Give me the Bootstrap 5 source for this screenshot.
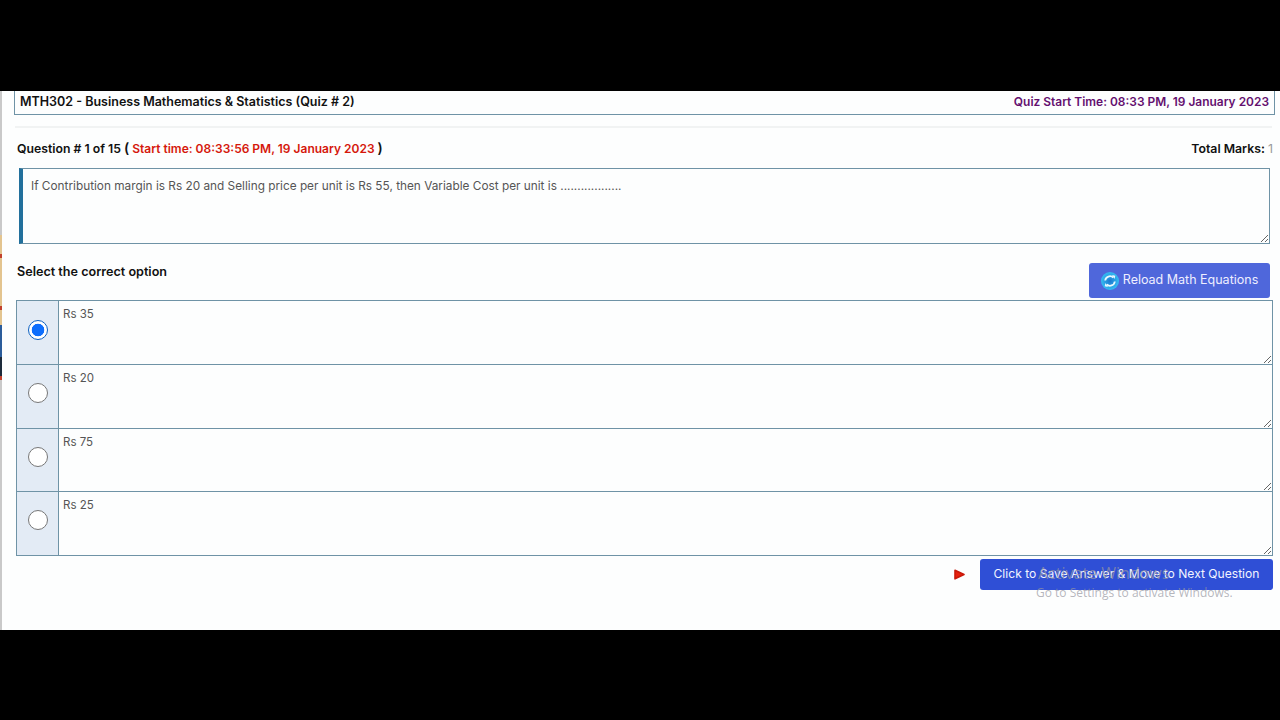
<!DOCTYPE html>
<html lang="en">
<head>
<meta charset="utf-8">
<title>Quiz</title>
<link href="https://cdn.jsdelivr.net/npm/bootstrap@5.3.0/dist/css/bootstrap.min.css" rel="stylesheet">
<style>
html,body{height:720px;overflow:hidden;background:#000;}
body{font-family:Inter,"Open Sans",sans-serif;}
.band-top{height:91px;background:#000;}
.band-bottom{height:90px;background:#000;}
.stage{height:539px;background:#fdfefe;position:relative;padding-left:2px;}
.edge{width:2px;position:absolute;left:0;top:0;bottom:0;background:#c9c9c9;}
.edge-art{position:absolute;left:0;top:144px;width:2px;height:145px;background:linear-gradient(#e3c48f 0 13%,#c2412c 13% 16%,#e3c48f 16% 49%,#c2412c 49% 52%,#e3c48f 52% 62%,#2b5c9a 62% 84%,#1c2a3a 84% 97%,#c2412c 97%);}
.quiz-head{margin:0 5px 0 12px;height:24px;border:1px solid #6f93a6;border-top:0;padding:0 5px;font-size:12.5px;font-weight:600;color:#111;}
.quiz-time{color:#640f6f;font-size:11.95px;padding-bottom:2px;}
.rule{height:2px;background:#f1f3f3;margin:11px 8px 0 13px;}
.q-row{margin:12px 7px 0 15px;font-size:12px;font-weight:600;color:#111;height:18px;}
.q-lead{font-size:12.25px;}
.q-start{color:#d5180c;}
.q-paren{font-size:14px;line-height:1;}
.q-total{font-size:12.3px;}
.mark-val{color:#999;font-weight:400;}
.q-text{display:block;width:1251px;height:76px;margin:10px 0 0 17px;border:1px solid #6f93a6;border-left:4px solid #22709c;border-radius:0;padding:9px 8px;font-size:11.82px;color:#555;background:#fdfefe;font-family:inherit;outline:0;}
.sel-row{margin:19px 10px 0 15px;height:35px;}
.sel-label{font-size:12.6px;font-weight:600;color:#111;}
.btn-reload{width:181px;height:35px;background:#4f67db;border:0;border-radius:3px;color:#eef;font-size:12.5px;padding:0;}
.opts{margin:2px 7px 0 14px;border:1px solid #6f93a6;}
.opt{height:63.5px;}
.opt:first-child{height:63px;}
.opt + .opt{border-top:1px solid #6f93a6;}
.opt-radio{width:42px;padding-bottom:6px;background:#e3ebf5;border-right:1px solid #6f93a6;}
.opt-radio .form-check-input{width:20px;height:20px;margin:0;border-color:#777;background-color:#fff;}
.opt-radio .form-check-input:checked{background-color:#fff;background-image:radial-gradient(circle,#0d6efd 0 6px,#fff 6.6px);border-color:#0b5fc0;}
.opt-text{border:0;border-radius:0;padding:5px 4px;font-size:11.5px;color:#555;background:#fdfefe;font-family:inherit;outline:0;height:100%;}
.foot-row{margin:3px 7px 0 0;gap:15px;}
.btn-next{width:293px;height:31px;background:#2f4fd6;border:0;border-radius:3px;color:#f2f4ff;font-size:12.1px;padding:0;}
.wm{position:absolute;left:1036px;top:473px;color:rgba(150,150,160,.7);font-family:"Open Sans",sans-serif;font-size:12px;line-height:19px;pointer-events:none;}
.wm-first{padding-left:2px;font-size:16px;}
</style>
</head>
<body>
<div class="band-top"></div>
<main class="stage">
  <div class="edge"></div><div class="edge-art"></div>
  <div class="quiz-head d-flex justify-content-between align-items-center">
    <span>MTH302 - Business Mathematics &amp; Statistics (Quiz # 2)</span>
    <span class="quiz-time">Quiz Start Time: 08:33 PM, 19 January 2023</span>
  </div>
  <div class="rule"></div>
  <div class="q-row d-flex justify-content-between align-items-center">
    <span><span class="q-lead">Question # 1 of 15</span> <span class="q-paren">(</span> <span class="q-start">Start time: 08:33:56 PM, 19 January 2023</span> <span class="q-paren">)</span></span>
    <span class="q-total">Total Marks: <span class="mark-val">1</span></span>
  </div>
  <textarea class="q-text" aria-label="Question">If Contribution margin is Rs 20 and Selling price per unit is Rs 55, then Variable Cost per unit is ..................</textarea>
  <div class="sel-row d-flex justify-content-between">
    <span class="sel-label">Select the correct option</span>
    <button type="button" class="btn btn-reload d-flex align-items-center justify-content-center gap-1">
      <svg width="18" height="18" viewBox="0 0 18 18" aria-hidden="true"><defs><radialGradient id="rg"><stop offset="0" stop-color="#1b78d0"/><stop offset="1" stop-color="#35bdf2"/></radialGradient></defs><circle cx="9" cy="9" r="9" fill="url(#rg)"/><path d="M4.2 8.5A4.8 4.8 0 0 1 12.3 5.6" fill="none" stroke="#eaf8ff" stroke-width="1.8"/><path d="M11 3l3.3.7-.7 3.3z" fill="#eaf8ff"/><path d="M13.8 9.5A4.8 4.8 0 0 1 5.7 12.4" fill="none" stroke="#eaf8ff" stroke-width="1.8"/><path d="M7 15l-3.3-.7.7-3.3z" fill="#eaf8ff"/></svg>
      Reload Math Equations
    </button>
  </div>
  <div class="opts">
    <div class="opt d-flex">
      <label class="opt-radio d-flex align-items-center justify-content-center flex-shrink-0"><input class="form-check-input" type="radio" name="ans" checked aria-label="Rs 35"></label>
      <textarea class="opt-text form-control flex-grow-1" aria-label="Option 1">Rs 35</textarea>
    </div>
    <div class="opt d-flex">
      <label class="opt-radio d-flex align-items-center justify-content-center flex-shrink-0"><input class="form-check-input" type="radio" name="ans" aria-label="Rs 20"></label>
      <textarea class="opt-text form-control flex-grow-1" aria-label="Option 2">Rs 20</textarea>
    </div>
    <div class="opt d-flex">
      <label class="opt-radio d-flex align-items-center justify-content-center flex-shrink-0"><input class="form-check-input" type="radio" name="ans" aria-label="Rs 75"></label>
      <textarea class="opt-text form-control flex-grow-1" aria-label="Option 3">Rs 75</textarea>
    </div>
    <div class="opt d-flex">
      <label class="opt-radio d-flex align-items-center justify-content-center flex-shrink-0"><input class="form-check-input" type="radio" name="ans" aria-label="Rs 25"></label>
      <textarea class="opt-text form-control flex-grow-1" aria-label="Option 4">Rs 25</textarea>
    </div>
  </div>
  <div class="foot-row d-flex justify-content-end align-items-center">
    <svg width="11" height="11" viewBox="0 0 11 11" aria-hidden="true"><path d="M1 1.2 10 5.5 1 9.8z" fill="#e8200c" stroke="#c9190a" stroke-width="1.6" stroke-linejoin="round"/></svg>
    <button type="button" class="btn btn-next">Click to Save Answer &amp; Move to Next Question</button>
  </div>
  <div class="wm"><div class="wm-first">Activate Windows</div><div>Go to Settings to activate Windows.</div></div>
</main>
<div class="band-bottom"></div>
<script src="https://cdn.jsdelivr.net/npm/bootstrap@5.3.0/dist/js/bootstrap.bundle.min.js"></script>
</body>
</html>
